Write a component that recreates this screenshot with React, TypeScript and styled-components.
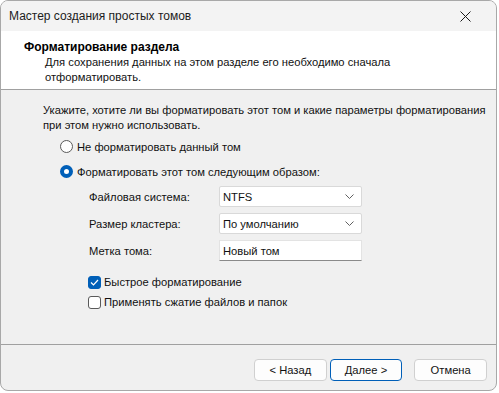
import React from "react";
import styled, { createGlobalStyle } from "styled-components";

const Global = createGlobalStyle`
  html, body { margin: 0; padding: 0; background: #ffffff; }
  body { font-family: "Liberation Sans", Arial, sans-serif; font-size: 11.2px; color: #111111; }
`;

const Window = styled.div`
  width: 495px;
  height: 389px;
  border: 1px solid #a8a8a8;
  border-radius: 8px;
  overflow: hidden;
  background: #f0f0f0;
  display: flex;
  flex-direction: column;
`;

const TitleBar = styled.div`
  height: 30px;
  display: flex;
  align-items: center;
  justify-content: space-between;
  padding: 0 0 0 8px;
  background: #f3f3f3;
`;

const TitleText = styled.span`
  font-size: 12px;
  color: #1c1c1c;
  white-space: nowrap;
`;

const CloseBtn = styled.div`
  width: 46px;
  height: 30px;
  display: flex;
  align-items: center;
  justify-content: center;
  margin-right: 8px;
`;

const Header = styled.div`
  background: #ffffff;
  border-bottom: 1px solid #a0a0a0;
  padding: 9px 0 0 23px;
  box-sizing: border-box;
  height: 59px;
`;

const HeaderTitle = styled.div`
  font-weight: 700;
  font-size: 12px;
  line-height: 15px;
  color: #000;
`;

const HeaderSub = styled.div`
  margin-left: 21px;
  line-height: 15px;
  white-space: nowrap;
`;

const Body = styled.div`
  flex: 1;
  padding: 13px 20px 0 42px;
  display: flex;
  flex-direction: column;
`;

const Para = styled.div`
  line-height: 15px;
  white-space: nowrap;
`;

const Options = styled.div`
  margin-left: 17px;
  margin-top: 1px;
  display: flex;
  flex-direction: column;
`;

const RadioRow = styled.div`
  display: flex;
  align-items: center;
  height: 25px;
  gap: 4px;
  white-space: nowrap;
`;

const RadioCircle = styled.span<{ $on?: boolean }>`
  width: 13px;
  height: 13px;
  box-sizing: border-box;
  border-radius: 50%;
  border: ${(p) => (p.$on ? "4px solid #005fb8" : "1px solid #5a5a5a")};
  background: #fff;
`;

const Fields = styled.div`
  margin-left: 29px;
  margin-top: 2px;
  display: grid;
  grid-template-columns: 130px 143px;
  row-gap: 6px;
  align-items: center;
`;

const FieldLabel = styled.span`
  white-space: nowrap;
`;

const Combo = styled.div`
  height: 21px;
  box-sizing: border-box;
  background: #fff;
  border: 1px solid #d9d9d9;
  border-radius: 2px;
  display: flex;
  align-items: center;
  justify-content: space-between;
  padding: 0 7px 0 3px;
`;

const TextBox = styled.div`
  height: 21px;
  box-sizing: border-box;
  background: #fff;
  border: 1px solid #e3e3e3;
  border-bottom: 1px solid #8a8a8a;
  display: flex;
  align-items: center;
  padding: 0 3px;
`;

const Checks = styled.div`
  margin-left: 28px;
  margin-top: 11px;
  display: flex;
  flex-direction: column;
`;

const CheckRow = styled.div`
  display: flex;
  align-items: center;
  height: 20px;
  gap: 3px;
  white-space: nowrap;
`;

const CheckBox = styled.span<{ $on?: boolean }>`
  width: 13px;
  height: 13px;
  box-sizing: border-box;
  border-radius: 3px;
  border: 1px solid ${(p) => (p.$on ? "#005fb8" : "#5a5a5a")};
  background: ${(p) => (p.$on ? "#005fb8" : "#fff")};
  display: flex;
  align-items: center;
  justify-content: center;
`;

const Footer = styled.div`
  height: 46px;
  border-top: 1px solid #a0a0a0;
  display: flex;
  align-items: flex-start;
  padding: 14px 9px 0 253px;
  box-sizing: border-box;
`;

const Button = styled.div<{ $default?: boolean; $gap?: number }>`
  width: 73px;
  height: 22px;
  box-sizing: border-box;
  background: #fdfdfd;
  border: 1px solid ${(p) => (p.$default ? "#005fb8" : "#d0d0d0")};
  border-radius: 4px;
  display: flex;
  align-items: center;
  justify-content: center;
  margin-left: ${(p) => p.$gap ?? 0}px;
`;

const Chevron = () => (
  <svg width="9" height="5" viewBox="0 0 9 5">
    <path d="M0.5 0.5 L4.5 4.5 L8.5 0.5" fill="none" stroke="#606060" strokeWidth="1" />
  </svg>
);

export default function App() {
  return (
    <>
      <Global />
      <Window>
        <TitleBar>
          <TitleText>Мастер создания простых томов</TitleText>
          <CloseBtn>
            <svg width="11" height="11" viewBox="0 0 11 11">
              <path d="M0.5 0.5 L10.5 10.5 M10.5 0.5 L0.5 10.5" stroke="#1a1a1a" strokeWidth="1" />
            </svg>
          </CloseBtn>
        </TitleBar>
        <Header>
          <HeaderTitle>Форматирование раздела</HeaderTitle>
          <HeaderSub>
            Для сохранения данных на этом разделе его необходимо сначала
            <br />
            отформатировать.
          </HeaderSub>
        </Header>
        <Body>
          <Para>
            Укажите, хотите ли вы форматировать этот том и какие параметры форматирования
            <br />
            при этом нужно использовать.
          </Para>
          <Options>
            <RadioRow>
              <RadioCircle />
              <span>Не форматировать данный том</span>
            </RadioRow>
            <RadioRow>
              <RadioCircle $on />
              <span>Форматировать этот том следующим образом:</span>
            </RadioRow>
            <Fields>
              <FieldLabel>Файловая система:</FieldLabel>
              <Combo>
                <span>NTFS</span>
                <Chevron />
              </Combo>
              <FieldLabel>Размер кластера:</FieldLabel>
              <Combo>
                <span>По умолчанию</span>
                <Chevron />
              </Combo>
              <FieldLabel>Метка тома:</FieldLabel>
              <TextBox>Новый том</TextBox>
            </Fields>
            <Checks>
              <CheckRow>
                <CheckBox $on>
                  <svg width="9" height="7" viewBox="0 0 9 7">
                    <path d="M1 3.5 L3.5 6 L8 1" fill="none" stroke="#fff" strokeWidth="1.2" />
                  </svg>
                </CheckBox>
                <span>Быстрое форматирование</span>
              </CheckRow>
              <CheckRow>
                <CheckBox />
                <span>Применять сжатие файлов и папок</span>
              </CheckRow>
            </Checks>
          </Options>
        </Body>
        <Footer>
          <Button>&lt; Назад</Button>
          <Button $default $gap={3}>Далее &gt;</Button>
          <Button $gap={12}>Отмена</Button>
        </Footer>
      </Window>
    </>
  );
}
